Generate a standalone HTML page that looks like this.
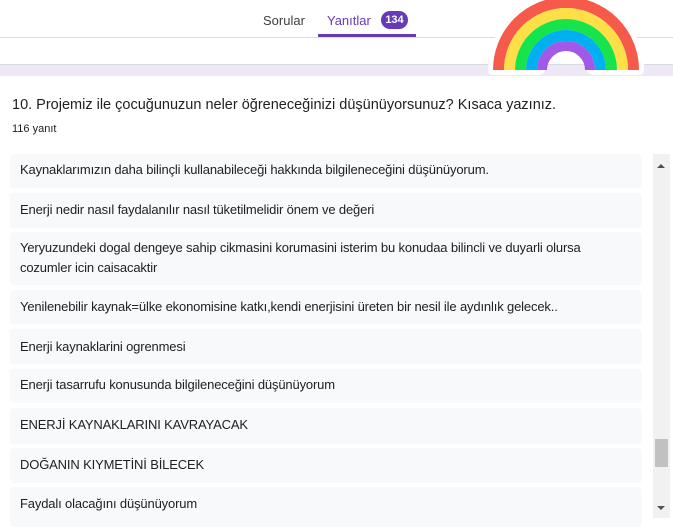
<!DOCTYPE html>
<html><head><style>
body{margin:0;width:673px;height:527px;overflow:hidden;background:#fff;font-family:"Liberation Sans",Arial,sans-serif;position:relative}
.tab{position:absolute;top:13px;font-size:13px}
.row{position:absolute;left:10px;width:632px;background:#f8f9fa;border-radius:4px;font-size:13px;color:#202124;box-sizing:border-box;padding:0 10px 0 10px;line-height:20px;letter-spacing:-0.15px}
</style></head><body>
<div class="tab" style="left:263px;color:#3c4043">Sorular</div>
<div class="tab" style="left:327px;color:#673ab7">Yanıtlar</div>
<div style="position:absolute;left:381px;top:11px;width:27px;height:18px;border-radius:9px;background:#673ab7;color:#fff;font-size:11px;font-weight:bold;text-align:center;line-height:18px">134</div>
<div style="position:absolute;left:318px;top:34px;width:98px;height:3px;background:#673ab7"></div>
<div style="position:absolute;left:0;top:37px;width:673px;height:1px;background:#dadce0"></div>
<div style="position:absolute;left:0;top:64px;width:673px;height:11px;background:#ede7f6;border-top:1px solid #dadce0"></div>
<svg style="position:absolute;left:485px;top:0" width="162" height="78" viewBox="0 0 162 78">
<path d="M3 70 A77 77 0 0 1 159 70 Q159 75 153 75 L110 75 Q104 75 101 70 A20 20 0 0 0 61 70 Q58 75 52 75 L9 75 Q3 75 3 70 Z" fill="#fff"/>
<path d="M13.5 70 A67.5 67.5 0 0 1 148.5 70" fill="none" stroke="#f55a4a" stroke-width="11"/>
<path d="M24.5 70 A56.5 56.5 0 0 1 137.5 70" fill="none" stroke="#fde047" stroke-width="11"/>
<path d="M35.5 70 A45.5 45.5 0 0 1 126.5 70" fill="none" stroke="#16e44a" stroke-width="11"/>
<path d="M46.5 70 A34.5 34.5 0 0 1 115.5 70" fill="none" stroke="#00b0f0" stroke-width="11"/>
<path d="M57 70 A24 24 0 0 1 105 70" fill="none" stroke="#a259e8" stroke-width="10"/>
</svg>
<div style="position:absolute;left:12px;top:97px;font-size:14.5px;color:#202124">10. Projemiz ile çocuğunuzun neler öğreneceğinizi düşünüyorsunuz? Kısaca yazınız.</div>
<div style="position:absolute;left:12px;top:123px;font-size:11px;color:#202124">116 yanıt</div>
<div class="row" style="top:154px;height:34px;padding-top:6px">Kaynaklarımızın daha bilinçli kullanabileceği hakkında bilgileneceğini düşünüyorum.</div>
<div class="row" style="top:193px;height:35px;padding-top:7px">Enerji nedir nasıl faydalanılır nasıl tüketilmelidir önem ve değeri</div>
<div class="row" style="top:232px;height:53px;padding-top:6px;padding-right:60px">Yeryuzundeki dogal dengeye sahip cikmasini korumasini isterim bu konudaa bilincli ve duyarli olursa cozumler icin caisacaktir</div>
<div class="row" style="top:290px;height:34px;padding-top:7px">Yenilenebilir kaynak=ülke ekonomisine katkı,kendi enerjisini üreten bir nesil ile aydınlık gelecek..</div>
<div class="row" style="top:329px;height:35px;padding-top:8px">Enerji kaynaklarini ogrenmesi</div>
<div class="row" style="top:369px;height:34px;padding-top:6px">Enerji tasarrufu konusunda bilgileneceğini düşünüyorum</div>
<div class="row" style="top:408px;height:36px;padding-top:7px">ENERJİ KAYNAKLARINI KAVRAYACAK</div>
<div class="row" style="top:448px;height:35px;padding-top:7px">DOĞANIN KIYMETİNİ BİLECEK</div>
<div class="row" style="top:487px;height:40px;padding-top:7px">Faydalı olacağını düşünüyorum</div>
<div style="position:absolute;left:653px;top:154px;width:17px;height:364px;background:#f1f1f1"></div>
<div style="position:absolute;left:655px;top:439px;width:13px;height:28px;background:#c1c1c1"></div>
<div style="position:absolute;left:657px;top:164px;width:0;height:0;border-left:4px solid transparent;border-right:4px solid transparent;border-bottom:4px solid #505050"></div>
<div style="position:absolute;left:657px;top:506px;width:0;height:0;border-left:4px solid transparent;border-right:4px solid transparent;border-top:4px solid #505050"></div>
</body></html>
